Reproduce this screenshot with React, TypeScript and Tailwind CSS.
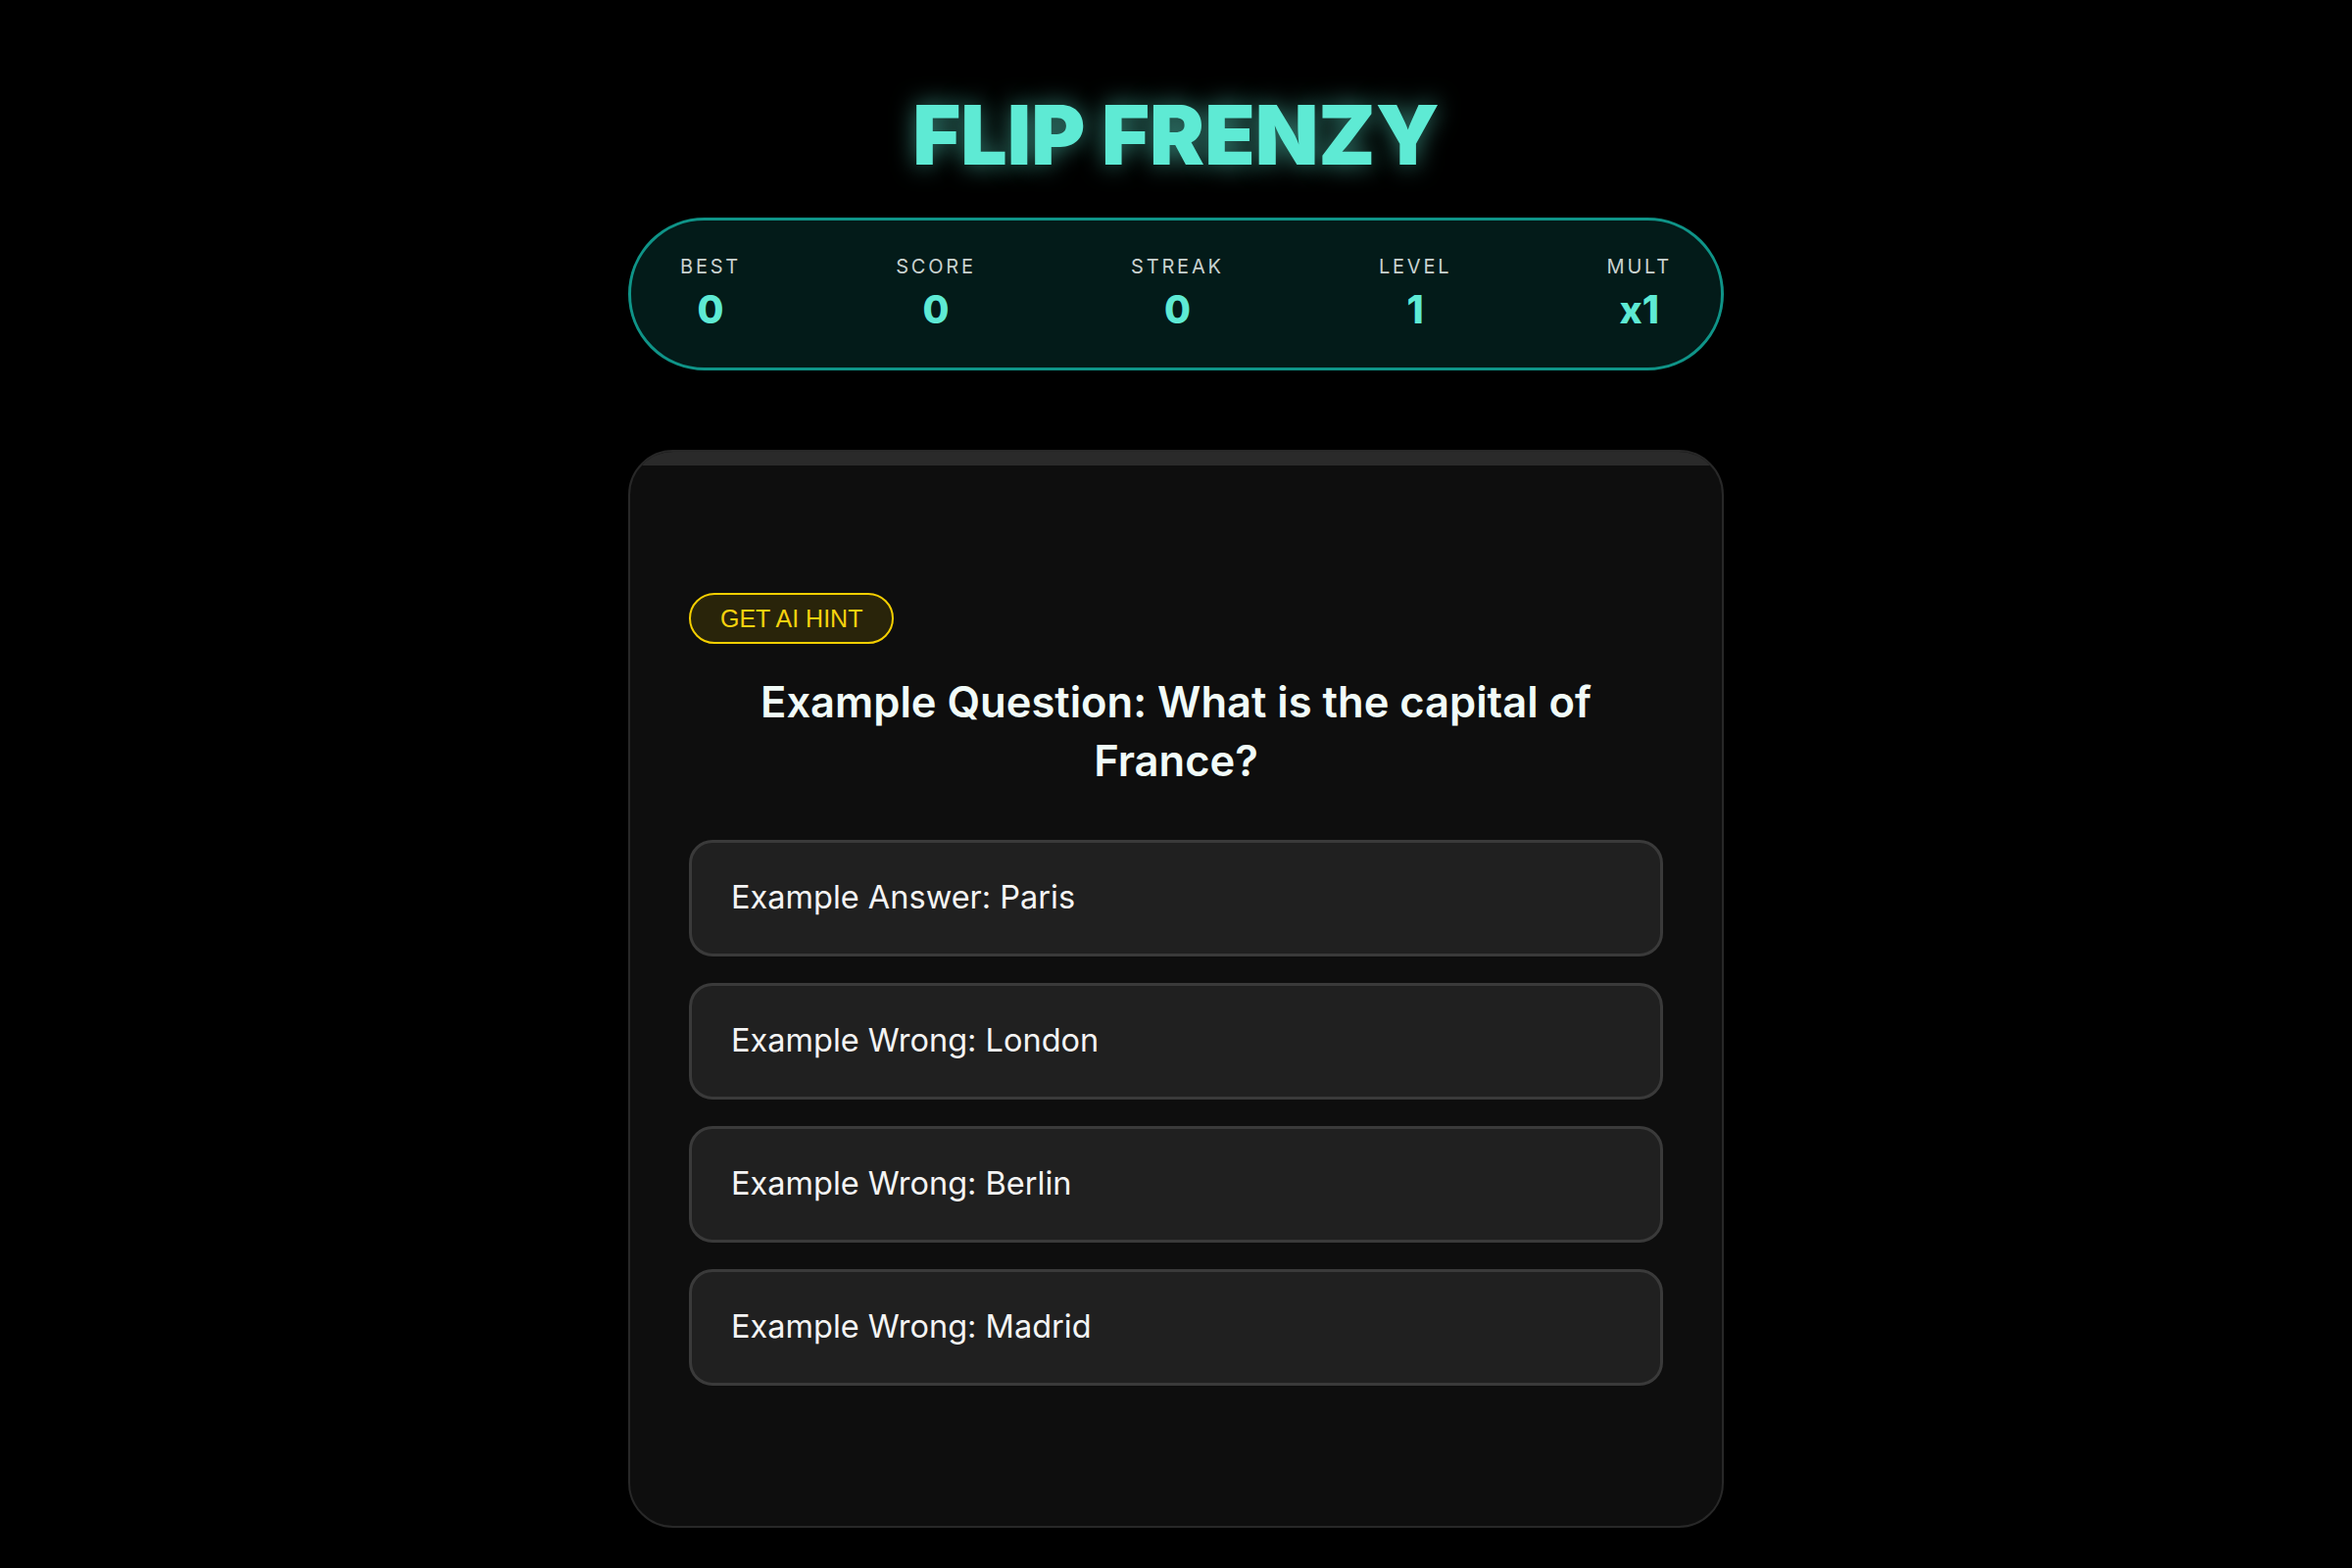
import React from 'react';

interface Stat {
  label: string;
  value: string;
}

const stats: Stat[] = [
  { label: 'BEST', value: '0' },
  { label: 'SCORE', value: '0' },
  { label: 'STREAK', value: '0' },
  { label: 'LEVEL', value: '1' },
  { label: 'MULT', value: 'x1' },
];

const answers = [
  'Example Answer: Paris',
  'Example Wrong: London',
  'Example Wrong: Berlin',
  'Example Wrong: Madrid',
];

const sans = { fontFamily: 'Inter, "Noto Sans", sans-serif' };

export default function App() {
  return (
    <div className="min-h-screen bg-black flex flex-col items-center pt-[96px]" style={sans}>
      <h1
        className="text-[84px] leading-none font-black tracking-[0em] text-[#5eead4] [text-shadow:0_0_24px_rgba(94,234,212,0.55)]"
      >
        FLIP FRENZY
      </h1>

      {/* stats bar */}
      <div className="mt-[42px] w-[1118px] h-[156px] rounded-full border-[3px] border-[#0f9488] bg-[#031b19] flex items-center justify-between px-[50px]">
        {stats.map((s) => (
          <div key={s.label} className="flex flex-col items-center -mt-[3px]">
            <span className="text-[20px] leading-none tracking-[0.14em] text-[#c9d2d0]">{s.label}</span>
            <span className="mt-[14px] text-[39px] leading-none font-extrabold text-[#5eead4]">{s.value}</span>
          </div>
        ))}
      </div>

      {/* question card */}
      <div className="mt-[81px] mb-[42px] w-[1118px] rounded-[46px] border-2 border-[#282828] bg-[#0e0e0e] overflow-hidden">
        <div className="h-[14px] bg-[#2a2a2a]" />
        <div className="px-[60px] pt-[130px] pb-[143px]">
          <button
            className="h-[52px] px-[30px] rounded-full border-2 border-[#f5cf00] bg-[#29240a] text-[#f7d20e] text-[25px] leading-none"
            style={{ fontFamily: '"Liberation Sans", Arial, sans-serif' }}
          >
            GET AI HINT
          </button>
          <h2 className="mt-[29px] mx-auto max-w-[900px] text-center text-[43.5px] leading-[60px] font-semibold text-[#f1fbf8]">
            Example Question: What is the capital of France?
          </h2>
          <div className="mt-[51px] flex flex-col gap-[27px]">
            {answers.map((a) => (
              <button
                key={a}
                className="h-[119px] w-full rounded-[24px] border-[3px] border-[#3a3a3a] bg-[#202020] text-left pl-[40px] text-[32.5px] text-[#f4f4f4]"
              >
                {a}
              </button>
            ))}
          </div>
        </div>
      </div>
    </div>
  );
}
